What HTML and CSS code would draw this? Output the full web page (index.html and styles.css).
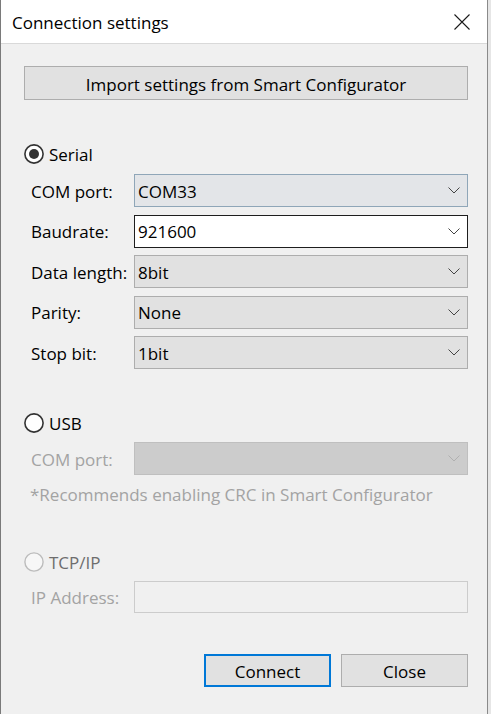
FILE: index.html
```html
<!DOCTYPE html>
<html>
<head>
<meta charset="utf-8">
<link rel="stylesheet" href="styles.css">
</head>
<body>
<div class="window">
  <div class="titlebar">
    <span class="title">Connection settings</span>
    <svg class="close-x" width="16" height="16" viewBox="0 0 16 16"><path d="M0.5 0.5 L15.5 15.5 M15.5 0.5 L0.5 15.5" stroke="#1a1a1a" stroke-width="1.1" fill="none"/></svg>
  </div>
  <div class="content">
    <div class="btn import">Import settings from Smart Configurator</div>

    <div class="radio-row serial">
      <svg class="radio" width="20" height="20" viewBox="0 0 20 20"><circle cx="10" cy="10" r="9.1" fill="#fff" stroke="#333" stroke-width="1.6"/><circle cx="10" cy="10" r="5" fill="#333"/></svg>
      <span>Serial</span>
    </div>
    <div class="fields">
      <div class="field">
        <span class="label">COM port:</span>
        <div class="combo hot"><span>COM33</span><svg class="chev" width="12" height="7" viewBox="0 0 12 7"><path d="M0.5 0.5 L6 6 L11.5 0.5" stroke="#444" stroke-width="1" fill="none"/></svg></div>
      </div>
      <div class="field">
        <span class="label">Baudrate:</span>
        <div class="combo edit"><span>921600</span><svg class="chev" width="12" height="7" viewBox="0 0 12 7"><path d="M0.5 0.5 L6 6 L11.5 0.5" stroke="#444" stroke-width="1" fill="none"/></svg></div>
      </div>
      <div class="field">
        <span class="label">Data length:</span>
        <div class="combo"><span>8bit</span><svg class="chev" width="12" height="7" viewBox="0 0 12 7"><path d="M0.5 0.5 L6 6 L11.5 0.5" stroke="#444" stroke-width="1" fill="none"/></svg></div>
      </div>
      <div class="field">
        <span class="label">Parity:</span>
        <div class="combo"><span>None</span><svg class="chev" width="12" height="7" viewBox="0 0 12 7"><path d="M0.5 0.5 L6 6 L11.5 0.5" stroke="#444" stroke-width="1" fill="none"/></svg></div>
      </div>
      <div class="field">
        <span class="label">Stop bit:</span>
        <div class="combo"><span>1bit</span><svg class="chev" width="12" height="7" viewBox="0 0 12 7"><path d="M0.5 0.5 L6 6 L11.5 0.5" stroke="#444" stroke-width="1" fill="none"/></svg></div>
      </div>
    </div>

    <div class="radio-row usb">
      <svg class="radio" width="20" height="20" viewBox="0 0 20 20"><circle cx="10" cy="10" r="9.1" fill="#fff" stroke="#333" stroke-width="1.6"/></svg>
      <span>USB</span>
    </div>
    <div class="field sub">
      <span class="label disabled">COM port:</span>
      <div class="combo off"><span></span><svg class="chev" width="12" height="7" viewBox="0 0 12 7"><path d="M0.5 0.5 L6 6 L11.5 0.5" stroke="#b0b0b0" stroke-width="1" fill="none"/></svg></div>
    </div>
    <div class="note">*Recommends enabling CRC in Smart Configurator</div>

    <div class="radio-row tcp">
      <svg class="radio" width="20" height="20" viewBox="0 0 20 20"><circle cx="10" cy="10" r="9.1" fill="#f7f7f7" stroke="#bcbcbc" stroke-width="1.4"/></svg>
      <span>TCP/IP</span>
    </div>
    <div class="field sub">
      <span class="label disabled">IP Address:</span>
      <div class="textbox off"></div>
    </div>

    <div class="actions">
      <div class="btn default">Connect</div>
      <div class="btn">Close</div>
    </div>
  </div>
</div>
</body>
</html>
```
FILE: styles.css
```css
html, body {
  margin: 0;
  padding: 0;
}
body {
  width: 491px;
  height: 714px;
  background: #e6e6e6;
  font-family: "Open Sans", "Noto Sans", sans-serif;
  font-size: 17px;
  color: #000;
  overflow: hidden;
}
.window {
  width: 486px;
  height: 714px;
  border-left: 1px solid #7a7a7a;
  border-right: 1px solid #8a8a8a;
  background: #f0f0f0;
  display: flex;
  flex-direction: column;
}
.titlebar {
  height: 43px;
  background: #fff;
  border-bottom: 1px solid #d9d9d9;
  display: flex;
  align-items: center;
  justify-content: space-between;
  padding: 0 17px 0 11px;
  box-sizing: content-box;
}
.title {
  font-size: 17px;
  color: #000;
  padding-top: 2px;
}
.close-x {
  margin-top: 1px;
}
.content {
  padding: 22px 19px 0 23px;
  display: flex;
  flex-direction: column;
}
.btn {
  box-sizing: border-box;
  height: 34px;
  background: #e1e1e1;
  border: 1px solid #adadad;
  display: flex;
  align-items: center;
  justify-content: center;
  padding-top: 2px;
}
.import {
  width: 444px;
}
.radio-row {
  display: flex;
  align-items: center;
  height: 20px;
  gap: 5px;
}
.radio {
  flex: none;
  display: block;
}
.serial { margin-top: 44px; }
.usb { margin-top: 44px; }
.tcp { margin-top: 47px; }
.tcp span { color: #6d6d6d; }
.fields {
  margin-top: 10px;
  display: flex;
  flex-direction: column;
  gap: 7.5px;
}
.field {
  display: flex;
  align-items: center;
  padding-left: 7px;
}
.field.sub { margin-top: 9px; }
.label {
  width: 103px;
  flex: none;
  padding-top: 1px;
}
.label.disabled { color: #a3a3a3; }
.combo, .textbox {
  box-sizing: border-box;
  width: 335px;
  height: 33px;
  border: 1px solid #adadad;
  background: #e1e1e1;
  display: flex;
  align-items: center;
  justify-content: space-between;
  padding: 0 7px 0 3px;
}
.combo span {
  padding-top: 1px;
}
.combo.hot {
  background: #e3e5e8;
  border-color: #8fa6b8;
}
.combo.edit {
  background: #fff;
  border-color: #1e1e1e;
}
.combo.off {
  background: #cccccc;
  border-color: #bfbfbf;
}
.textbox.off {
  background: #f0f0f0;
  border-color: #cccccc;
  height: 32px;
}
.chev { display: block; flex: none; }
.note {
  margin-top: 10px;
  padding-left: 6px;
  color: #a3a3a3;
  line-height: 20px;
}
.actions {
  margin-top: 41px;
  display: flex;
  justify-content: flex-end;
  gap: 10px;
}
.actions .btn {
  width: 127px;
  height: 33px;
}
.btn.default {
  border: 2px solid #0078d7;
}
```
